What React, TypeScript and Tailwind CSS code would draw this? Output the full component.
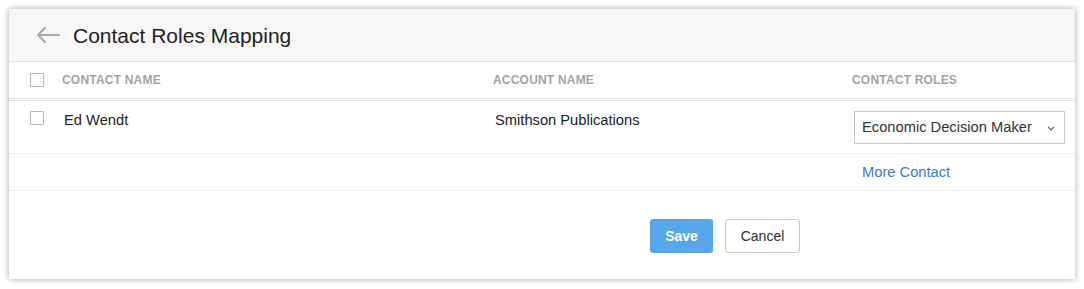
import React, { useState } from 'react';

const font = { fontFamily: '"Liberation Sans", Arial, sans-serif' };

const Checkbox: React.FC = () => {
  const [checked, setChecked] = useState(false);
  return (
    <button
      onClick={() => setChecked(!checked)}
      className="w-[14px] h-[14px] border border-[#b5b5b5] bg-white rounded-[1px] shrink-0"
      aria-checked={checked}
    />
  );
};

const App: React.FC = () => {
  const [role, setRole] = useState('Economic Decision Maker');

  return (
    <div className="w-[1084px] h-[289px] bg-white p-[9px]" style={font}>
      <div className="h-[270px] w-[1066px] bg-white shadow-[0_0_6px_rgba(0,0,0,0.35)] flex flex-col">
        {/* header */}
        <div className="h-[53px] bg-[#f7f7f7] border-b border-[#e3e3e3] flex items-center pl-[27px]">
          <svg width="24" height="16" viewBox="0 0 24 16" className="text-[#a9a9a9]">
            <path d="M23 8H2M9 1L2 8l7 7" fill="none" stroke="currentColor" strokeWidth="2" strokeLinecap="round" strokeLinejoin="round" />
          </svg>
          <h1 className="ml-[13px] text-[21px] text-[#222] leading-none">Contact Roles Mapping</h1>
        </div>

        {/* table head */}
        <div className="h-[37px] flex items-center border-b border-[#e3e3e3] text-[12px] font-semibold text-[#a3a3a3] tracking-[0.2px]">
          <div className="w-[53px] pl-[21px] flex"><Checkbox /></div>
          <div className="w-[431px]">CONTACT NAME</div>
          <div className="w-[359px]">ACCOUNT NAME</div>
          <div className="flex-1">CONTACT ROLES</div>
        </div>
        <div className="h-px mt-px bg-[#e3e3e3]" />

        {/* row */}
        <div className="h-[53px] flex items-start pt-[10px] border-b border-[#efefef] text-[14.7px] text-[#222]">
          <div className="w-[53px] pl-[21px] flex"><Checkbox /></div>
          <div className="w-[431px] pl-[2px] leading-[18px]">Ed Wendt</div>
          <div className="w-[359px] pl-[2px] leading-[18px]">Smithson Publications</div>
          <div className="flex-1 pl-[2px]">
            <div className="relative w-[211px] h-[33px] border border-[#c9c9c9] bg-white">
              <select
                value={role}
                onChange={(e) => setRole(e.target.value)}
                className="appearance-none w-full h-full pl-[7px] pr-6 text-[14.7px] text-[#333] bg-transparent outline-none"
                style={font}
              >
                <option>Economic Decision Maker</option>
                <option>Technical Buyer</option>
                <option>Evaluator</option>
                <option>Influencer</option>
              </select>
              <svg width="8" height="5" viewBox="0 0 8 5" className="absolute right-[9px] top-[14px] pointer-events-none">
                <path d="M1 1l3 3 3-3" fill="none" stroke="#666" strokeWidth="1.2" />
              </svg>
            </div>
          </div>
        </div>

        {/* more contact */}
        <div className="h-[37px] flex items-center border-b border-[#efefef]">
          <div className="w-[843px]" />
          <a href="#" className="pl-[10px] text-[14.7px] text-[#3b7dcc]">More Contact</a>
        </div>

        {/* actions */}
        <div className="flex pt-[28px] pl-[641px] gap-[12px]">
          <button className="w-[63px] h-[34px] rounded-[3px] bg-[#57a6ea] text-white text-[14px] font-bold">Save</button>
          <button className="w-[75px] h-[34px] rounded-[3px] border border-[#c6c6c6] bg-white text-[#333] text-[14px]">Cancel</button>
        </div>
      </div>
    </div>
  );
};

export default App;
